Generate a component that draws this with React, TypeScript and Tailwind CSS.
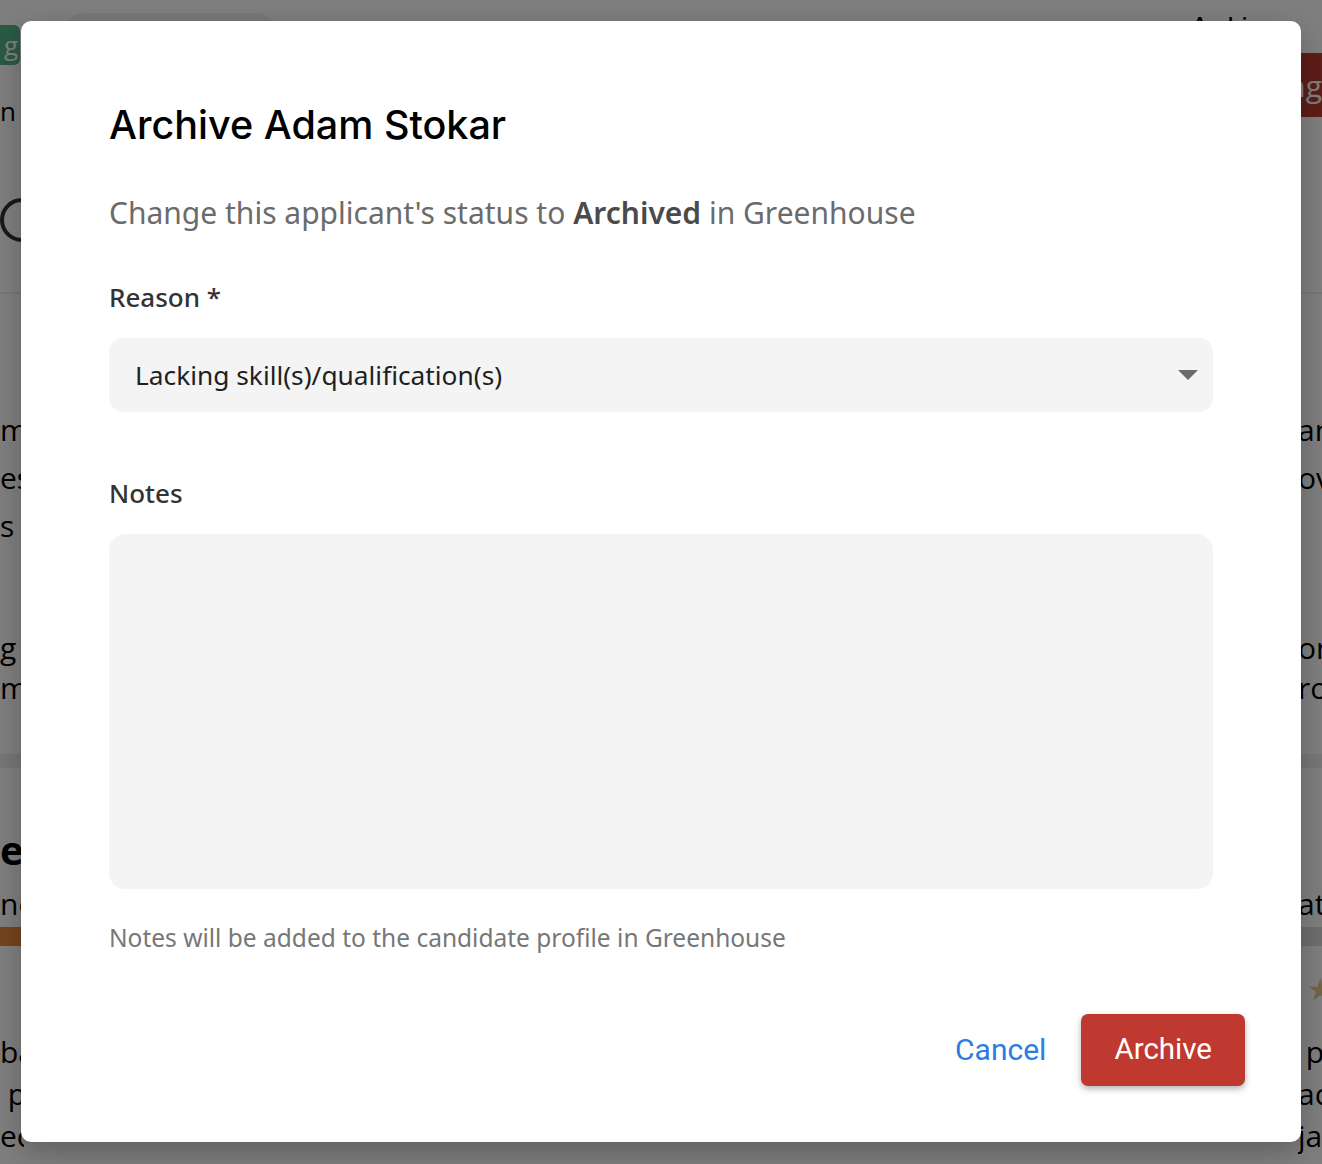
import React from "react";

function BackgroundPage() {
  return (
    <div className="absolute inset-0 bg-white text-black font-['Open_Sans',sans-serif]">
      {/* top bar */}
      <div className="flex h-[72px] items-start justify-between">
        <div className="flex items-start gap-[40px]">
          <div className="mt-[25px] flex h-[40px] w-[20px] items-center justify-end rounded-r-[6px] bg-[#55b48b] pr-[2px] text-[26px] leading-none text-white">
            g
          </div>
          <div className="mt-[13px] h-[50px] w-[220px] rounded-full bg-[#f0f0f0]" />
        </div>
        <div className="mr-[50px] mt-[8px] text-[22px] font-semibold">Archive</div>
      </div>
      <div className="flex items-start justify-between">
        <div className="mt-[26px] text-[26px] leading-none">n</div>
        <div className="-mt-[19px] flex h-[64px] w-[90px] items-center justify-end overflow-hidden rounded-l-[4px] bg-[#bc3a31] pr-[0px] text-[30px] text-white">
          ng
        </div>
      </div>
      <div className="mt-[74px] h-[44px] w-[44px] rounded-full border-[4px] border-[#333]" />
      <div className="mt-[50px] h-[2px] w-full bg-[#eeeeee]" />
      <div className="mt-[112px] flex justify-between text-[30px] leading-[48px]">
        <div className="w-[24px] overflow-hidden whitespace-nowrap">
          <div>m</div>
          <div>es</div>
          <div>s</div>
        </div>
        <div className="w-[24px] overflow-hidden whitespace-nowrap">
          <div>an</div>
          <div>ov</div>
          <div>&nbsp;</div>
        </div>
      </div>
      <div className="mt-[78px] flex justify-between text-[30px] leading-[40px]">
        <div className="w-[24px] overflow-hidden whitespace-nowrap">
          <div>g a</div>
          <div>mo</div>
        </div>
        <div className="w-[24px] overflow-hidden whitespace-nowrap">
          <div>on</div>
          <div>ro</div>
        </div>
      </div>
      <div className="mt-[46px] h-[14px] w-full bg-[#eeeeee]" />
      <div className="mt-[62px] w-[24px] overflow-hidden text-[40px] font-bold leading-none">er</div>
      <div className="mt-[14px] flex justify-between text-[30px] leading-[40px]">
        <div className="w-[24px] overflow-hidden">nc</div>
        <div className="w-[24px] overflow-hidden">at</div>
      </div>
      <div className="mt-[3px] flex h-[19px]">
        <div className="w-[60px] bg-[#e88a3a]" />
        <div className="flex-1 bg-[#ffffff]" />
        <div className="w-[30px] bg-[#dddddd]" />
      </div>
      <div className="mt-[28px] flex justify-end text-[30px] leading-none text-[#e6c88d]">
        <span className="-mr-[12px]">★</span>
      </div>
      <div className="mt-[27px] flex justify-between text-[30px] leading-[42px]">
        <div className="w-[24px] overflow-hidden whitespace-nowrap">
          <div>ba</div>
          <div>&nbsp;p</div>
          <div>ec</div>
          <div>ut</div>
        </div>
        <div className="w-[24px] overflow-hidden whitespace-nowrap">
          <div>&nbsp;p</div>
          <div>ac</div>
          <div>ja</div>
          <div>M</div>
        </div>
      </div>
    </div>
  );
}

export default function App() {
  return (
    <div className="relative h-[1164px] w-[1322px] overflow-hidden">
      <BackgroundPage />
      <div className="absolute inset-0 bg-black/50" />
      <div className="absolute left-[21px] top-[21px] flex h-[1121px] w-[1280px] flex-col rounded-[10px] bg-white shadow-[0_10px_30px_rgba(0,0,0,0.25)]">
        <div className="flex flex-col px-[88px] pt-[81px]">
          <h1 className="font-['Inter',sans-serif] text-[39.5px] font-medium leading-[46px] text-black">
            Archive Adam Stokar
          </h1>
          <p className="mt-[44px] font-['Noto_Sans',sans-serif] text-[30px] leading-[42px] text-[#6b6b6b]">
            Change this applicant's status to{" "}
            <span className="font-semibold text-[#4a4a4a]">Archived</span> in Greenhouse
          </p>
          <label className="mt-[45px] font-['Noto_Sans',sans-serif] text-[26px] font-medium leading-[36px] text-[#333333]">
            Reason *
          </label>
          <div className="mt-[23px] flex h-[74px] items-center justify-between rounded-[14px] bg-[#f4f4f4] pl-[26px] pr-[15px]">
            <span className="font-['Noto_Sans',sans-serif] text-[26.3px] leading-none text-[#1f1f1f]">
              Lacking skill(s)/qualification(s)
            </span>
            <svg width="20" height="10" viewBox="0 0 20 10" className="block">
              <path d="M0 0 L20 0 L10 10 Z" fill="#6b6b6b" />
            </svg>
          </div>
          <label className="mt-[63px] font-['Noto_Sans',sans-serif] text-[26px] font-medium leading-[36px] text-[#333333]">
            Notes
          </label>
          <div className="mt-[23px] h-[355px] rounded-[16px] bg-[#f4f4f4]" />
          <p className="mt-[33px] font-['Noto_Sans',sans-serif] text-[24.5px] leading-[32px] text-[#777777]">
            Notes will be added to the candidate profile in Greenhouse
          </p>
        </div>
        <div className="mt-[60px] flex items-center justify-end gap-[35px] pr-[56px]">
          <button className="font-['Roboto',sans-serif] text-[30px] leading-none text-[#2b7de3]">
            Cancel
          </button>
          <button className="flex h-[72px] items-center rounded-[7px] bg-[#bf3930] px-[33px] font-['Roboto',sans-serif] text-[29.5px] leading-none text-white shadow-[0_3px_6px_rgba(0,0,0,0.3)]">
            Archive
          </button>
        </div>
      </div>
    </div>
  );
}
